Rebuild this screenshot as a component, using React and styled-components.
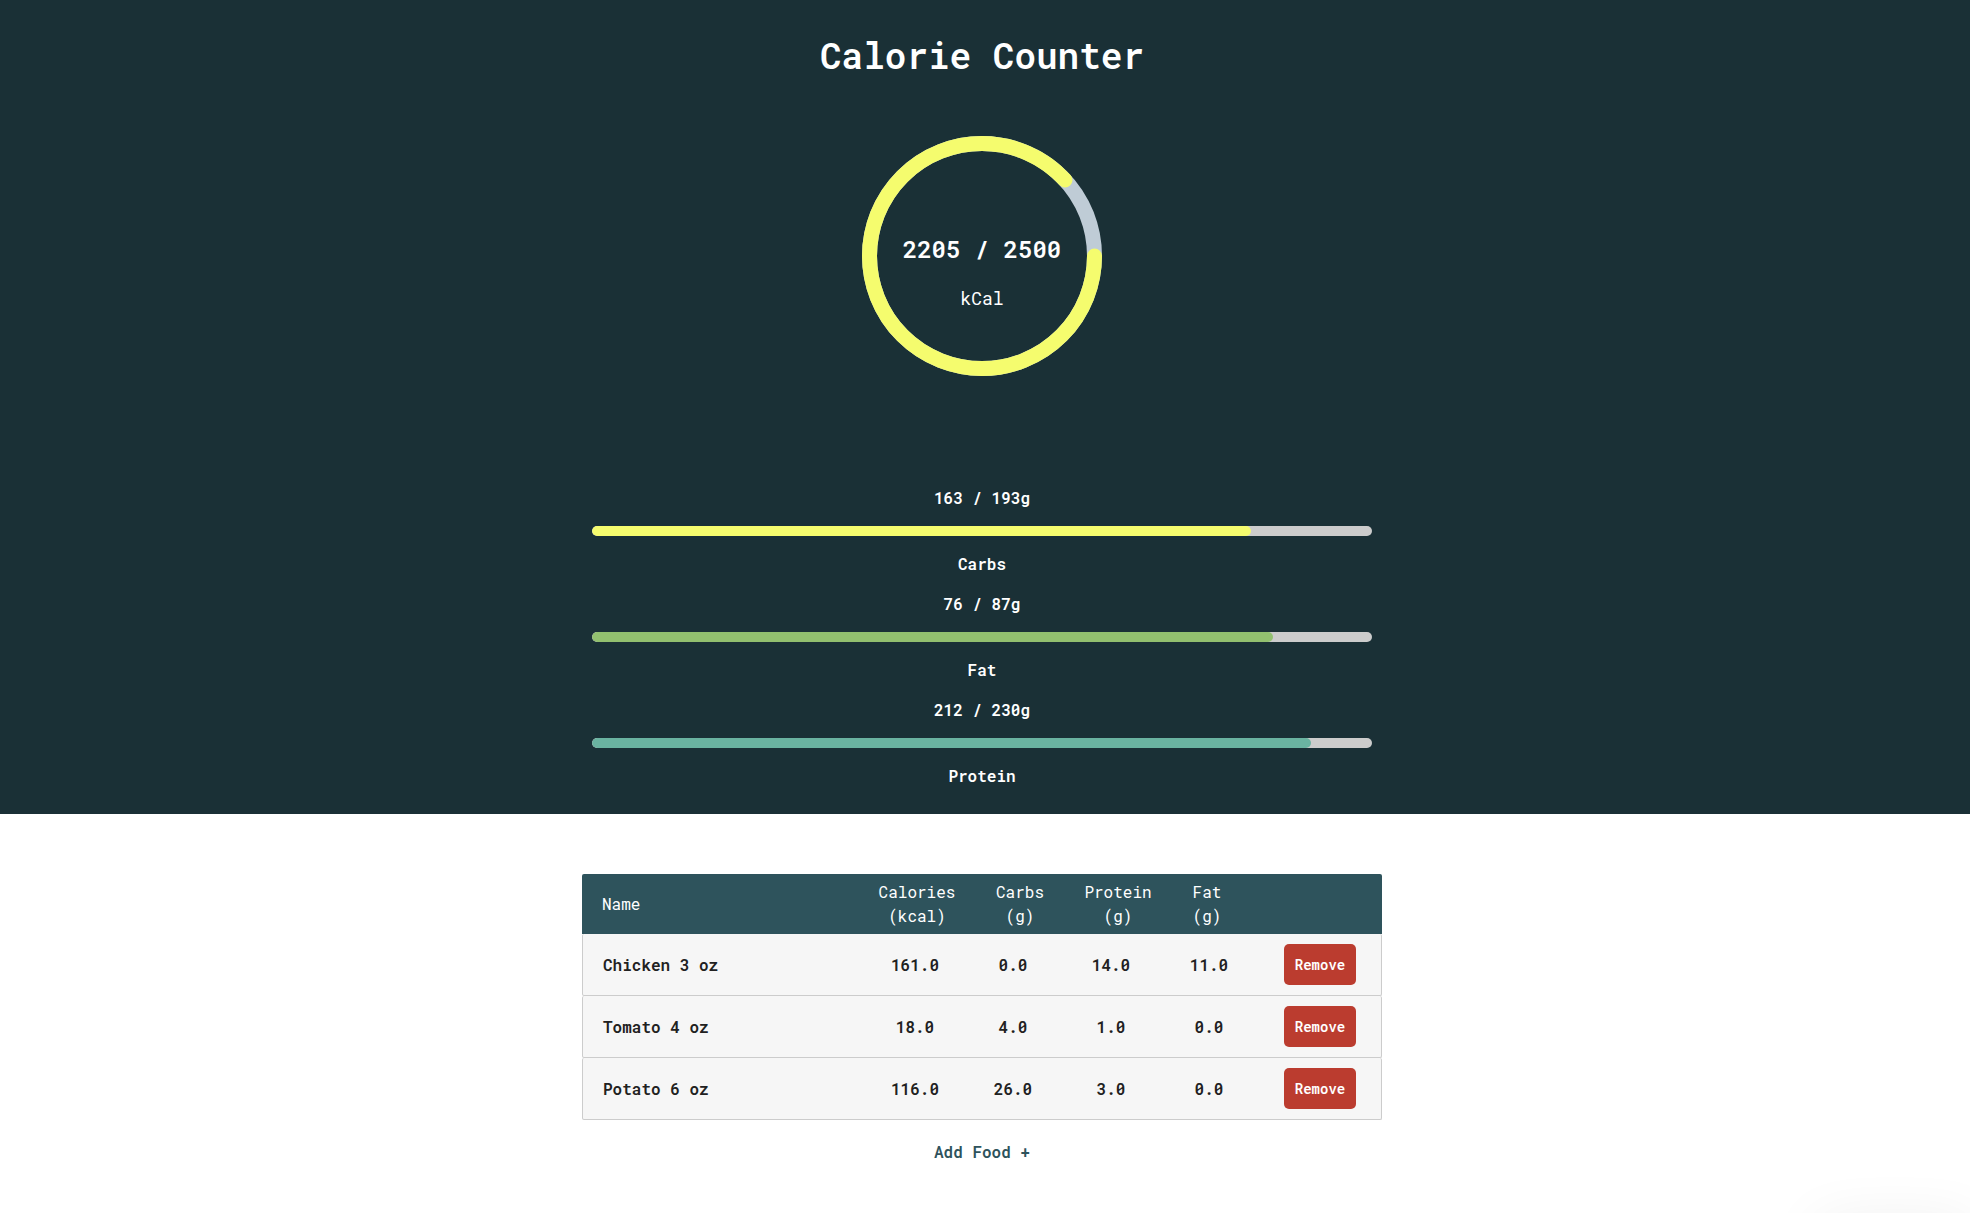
import React from 'react';
import styled, { createGlobalStyle } from 'styled-components';

const GlobalStyle = createGlobalStyle`
  *, *::before, *::after { box-sizing: border-box; }
  body {
    margin: 0;
    overflow-x: hidden;
    background: #fff;
    color: #212121;
    font-family: 'Roboto Mono', 'DejaVu Sans Mono', 'Liberation Mono', monospace;
    font-size: 16px;
    line-height: 24px;
  }
`;

const Summary = styled.header`
  display: flex;
  flex-direction: column;
  align-items: center;
  padding: 28px 6px 26px 0;
  background: #1a3036;
  color: #fff;
`;

const Title = styled.h1`
  margin: 0 0 54px;
  font-size: 36px;
  line-height: 54px;
  font-weight: 600;
`;

const Ring = styled.div`
  display: grid;
  width: 240px;
  height: 240px;
  margin-bottom: 110px;

  > * { grid-area: 1 / 1; }
`;

const RingLabel = styled.div`
  display: flex;
  flex-direction: column;
  align-items: center;
  gap: 18px;
  padding-top: 95px;
`;

const RingValue = styled.strong`
  font-size: 24px;
  line-height: 36px;
  font-weight: 600;
`;

const RingUnit = styled.span`
  font-size: 18px;
  line-height: 27px;
`;

const Macros = styled.section`
  display: flex;
  flex-direction: column;
  gap: 16px;
  width: 100%;
  max-width: 780px;
`;

const Macro = styled.div`
  display: flex;
  flex-direction: column;
  gap: 16px;
  text-align: center;
  font-weight: 600;
`;

const Track = styled.div`
  height: 10px;
  border-radius: 5px;
  background: #ccc;
  overflow: hidden;
`;

const Fill = styled.div`
  height: 100%;
  border-radius: 5px;
  background: ${(p) => p.$color};
`;

const Main = styled.main`
  display: flex;
  flex-direction: column;
  align-items: center;
  padding: 60px 6px 48px 0;
`;

const Table = styled.table`
  display: block;
  width: 100%;
  max-width: 800px;

  thead, tbody { display: block; }
  th, td { padding: 0; }
`;

const HeadRow = styled.tr`
  display: grid;
  grid-template-columns: 1fr 78px 48px 68px 30px 100px;
  column-gap: 40px;
  align-items: center;
  padding: 6px 20px;
  border-radius: 2px 2px 0 0;
  background: #2e535c;
  color: #fff;
`;

const HeadCell = styled.th`
  font-weight: 400;
  text-align: ${(p) => (p.$left ? 'left' : 'center')};
`;

const Unit = styled.span`
  display: block;
`;

const FoodRow = styled.tr`
  display: grid;
  grid-template-columns: 1fr repeat(5, 98px);
  align-items: center;
  padding: 10px 25px 10px 20px;
  border: 1px solid #ccc;
  border-top: 0;
  border-radius: 2px;
  background: #f6f6f6;
  font-weight: 600;
`;

const NameCell = styled.th`
  font-weight: 600;
  text-align: left;
`;

const ValueCell = styled.td`
  text-align: center;
`;

const ActionCell = styled.td`
  display: flex;
  justify-content: flex-end;
`;

const RemoveButton = styled.button`
  width: 72px;
  height: 41px;
  padding: 0;
  border: 0;
  border-radius: 5px;
  background: #bb3c2f;
  color: #fff;
  font-family: inherit;
  font-size: 14px;
  font-weight: 600;
  cursor: pointer;
`;

const AddButton = styled.button`
  margin-top: 20px;
  padding: 0;
  border: 0;
  background: none;
  color: #2e535c;
  font: inherit;
  font-weight: 600;
  cursor: pointer;
`;

const CornerPanel = styled.aside`
  position: fixed;
  right: 0;
  bottom: -40px;
  width: 150px;
  height: 20px;
  box-shadow: 0 0 60px rgba(0, 0, 0, 0.16);
`;

const macros = [
  { name: 'Carbs', value: 163, goal: 193, color: '#f5fc6e' },
  { name: 'Fat', value: 76, goal: 87, color: '#92c06f' },
  { name: 'Protein', value: 212, goal: 230, color: '#6ab3a1' },
];

const columns = [
  ['Calories', '(kcal)'],
  ['Carbs', '(g)'],
  ['Protein', '(g)'],
  ['Fat', '(g)'],
];

const foods = [
  { name: 'Chicken 3 oz', values: ['161.0', '0.0', '14.0', '11.0'] },
  { name: 'Tomato 4 oz', values: ['18.0', '4.0', '1.0', '0.0'] },
  { name: 'Potato 6 oz', values: ['116.0', '26.0', '3.0', '0.0'] },
];

function CalorieRing({ value, goal }) {
  return (
    <Ring>
      <svg width="240" height="240" viewBox="0 0 240 240" fill="none" strokeWidth="15" aria-hidden="true">
        <circle cx="120" cy="120" r="112.5" stroke="#bfccd6" />
        <circle
          cx="120"
          cy="120"
          r="112.5"
          stroke="#f5fc6e"
          strokeLinecap="round"
          pathLength="100"
          strokeDasharray={`${(value / goal) * 100} 100`}
        />
      </svg>
      <RingLabel>
        <RingValue>{`${value} / ${goal}`}</RingValue>
        <RingUnit>kCal</RingUnit>
      </RingLabel>
    </Ring>
  );
}

function MacroBar({ name, value, goal, color }) {
  return (
    <Macro>
      <span>{`${value} / ${goal}g`}</span>
      <Track role="progressbar" aria-label={name} aria-valuenow={value} aria-valuemin={0} aria-valuemax={goal}>
        <Fill $color={color} style={{ width: `${(value / goal) * 100}%` }} />
      </Track>
      <span>{name}</span>
    </Macro>
  );
}

export default function App() {
  return (
    <>
      <GlobalStyle />
      <Summary>
        <Title>Calorie Counter</Title>
        <CalorieRing value={2205} goal={2500} />
        <Macros>
          {macros.map((m) => (
            <MacroBar key={m.name} {...m} />
          ))}
        </Macros>
      </Summary>
      <Main>
        <Table>
          <thead>
            <HeadRow>
              <HeadCell scope="col" $left>Name</HeadCell>
              {columns.map(([label, unit]) => (
                <HeadCell key={label} scope="col">
                  {label}
                  <Unit>{unit}</Unit>
                </HeadCell>
              ))}
              <td />
            </HeadRow>
          </thead>
          <tbody>
            {foods.map((food) => (
              <FoodRow key={food.name}>
                <NameCell scope="row">{food.name}</NameCell>
                {food.values.map((v, i) => (
                  <ValueCell key={columns[i][0]}>{v}</ValueCell>
                ))}
                <ActionCell>
                  <RemoveButton type="button">Remove</RemoveButton>
                </ActionCell>
              </FoodRow>
            ))}
          </tbody>
        </Table>
        <AddButton type="button">Add Food +</AddButton>
      </Main>
      <CornerPanel />
    </>
  );
}
